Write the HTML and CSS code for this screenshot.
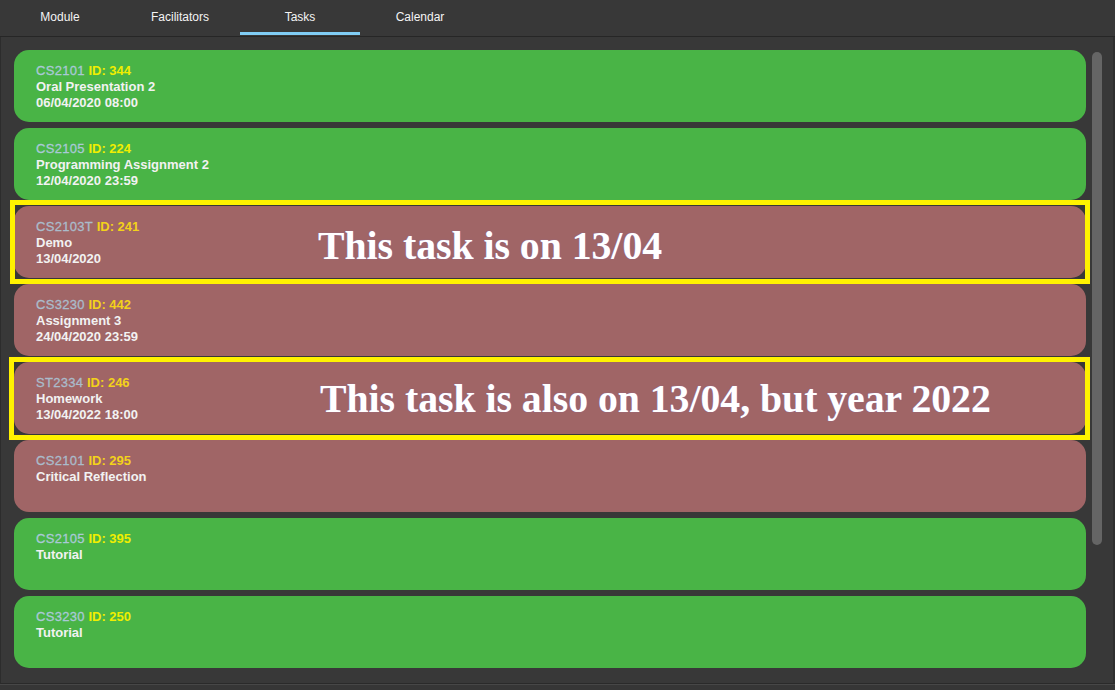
FILE: index.html
```html
<!DOCTYPE html>
<html>
<head>
<meta charset="utf-8">
<link rel="stylesheet" href="styles.css">
</head>
<body>
<div class="tabs">
  <div class="tab">Module</div>
  <div class="tab">Facilitators</div>
  <div class="tab active">Tasks</div>
  <div class="tab">Calendar</div>
</div>
<div class="panel">
  <div class="list">
    <div class="card green">
      <div class="line"><span class="code">CS2101</span> <span class="id">ID: 344</span></div>
      <div class="line">Oral Presentation 2</div>
      <div class="line">06/04/2020 08:00</div>
    </div>
    <div class="card green">
      <div class="line"><span class="code">CS2105</span> <span class="id">ID: 224</span></div>
      <div class="line">Programming Assignment 2</div>
      <div class="line">12/04/2020 23:59</div>
    </div>
    <div class="card red marked">
      <div class="line"><span class="code">CS2103T</span> <span class="id">ID: 241</span></div>
      <div class="line">Demo</div>
      <div class="line">13/04/2020</div>
      <div class="note note-a">This task is on 13/04</div>
    </div>
    <div class="card red">
      <div class="line"><span class="code">CS3230</span> <span class="id">ID: 442</span></div>
      <div class="line">Assignment 3</div>
      <div class="line">24/04/2020 23:59</div>
    </div>
    <div class="card red marked marked-b">
      <div class="line"><span class="code">ST2334</span> <span class="id">ID: 246</span></div>
      <div class="line">Homework</div>
      <div class="line">13/04/2022 18:00</div>
      <div class="note note-b">This task is also on 13/04, but year 2022</div>
    </div>
    <div class="card red">
      <div class="line"><span class="code">CS2101</span> <span class="id">ID: 295</span></div>
      <div class="line">Critical Reflection</div>
    </div>
    <div class="card green">
      <div class="line"><span class="code">CS2105</span> <span class="id">ID: 395</span></div>
      <div class="line">Tutorial</div>
    </div>
    <div class="card green">
      <div class="line"><span class="code">CS3230</span> <span class="id">ID: 250</span></div>
      <div class="line">Tutorial</div>
    </div>
  </div>
  <div class="track"><div class="thumb"></div></div>
</div>
<div class="footer"></div>
</body>
</html>
```
FILE: styles.css
```css
* { box-sizing: border-box; }
html, body {
  margin: 0;
  padding: 0;
  background: #383838;
  font-family: "Liberation Sans", Arial, sans-serif;
  overflow: hidden;
}
.tabs {
  display: flex;
  height: 37px;
  border-bottom: 1px solid #262626;
  background: #383838;
}
.tab {
  width: 120px;
  height: 35px;
  padding-top: 2px;
  line-height: 30px;
  text-align: center;
  font-size: 12px;
  color: #f4f4f4;
  border-bottom: 3px solid transparent;
}
.tab.active { border-bottom-color: #80cdf5; }
.panel {
  display: flex;
  height: 647px;
  border-left: 1px solid #2c2c2c;
  border-right: 2px solid #2e2e2e;
  border-bottom: 1px solid #2a2a2a;
  overflow: hidden;
}
.list {
  flex: 1;
  padding: 13px 0 16px 13px;
  display: flex;
  flex-direction: column;
  gap: 6px;
}
.card {
  position: relative;
  width: 1072px;
  height: 72px;
  flex: none;
  border-radius: 15px;
  padding: 13px 22px 0;
  font-size: 13px;
  font-weight: bold;
  color: #f2f2f2;
}
.green { background: #49b446; }
.red { background: #a06566; }
.line { line-height: 16px; white-space: nowrap; }
.code { color: #a9c9d6; font-weight: normal; -webkit-text-stroke: 0.3px #a9c9d6; letter-spacing: 0.3px; }
.red .code { color: #aabccb; -webkit-text-stroke-color: #aabccb; }
.id { color: #f0ee00; }
.red .id { color: #f3d21a; }
.marked::after {
  content: "";
  position: absolute;
  top: -6px;
  bottom: -6px;
  left: -4px;
  right: -4px;
  border: 5px solid #fff200;
  pointer-events: none;
}
.marked-b::after {
  top: -5px;
  left: -5px;
}
.note {
  position: absolute;
  font-family: "Liberation Serif", "Times New Roman", serif;
  font-weight: bold;
  font-size: 39.7px;
  line-height: 46px;
  color: #ffffff;
  white-space: nowrap;
  text-shadow: 0 0 1px rgba(120, 120, 255, 0.6);
}
.note-a { left: 304px; top: 17px; }
.note-b { left: 306px; top: 14px; }
.track {
  width: 27px;
  padding: 15px 11px 0 6px;
  flex: none;
}
.thumb {
  width: 10px;
  height: 493px;
  border-radius: 5px;
  background: #656565;
}
.footer {
  height: 6px;
  border-top: 1px solid #474747;
  background: #363636;
}
```
